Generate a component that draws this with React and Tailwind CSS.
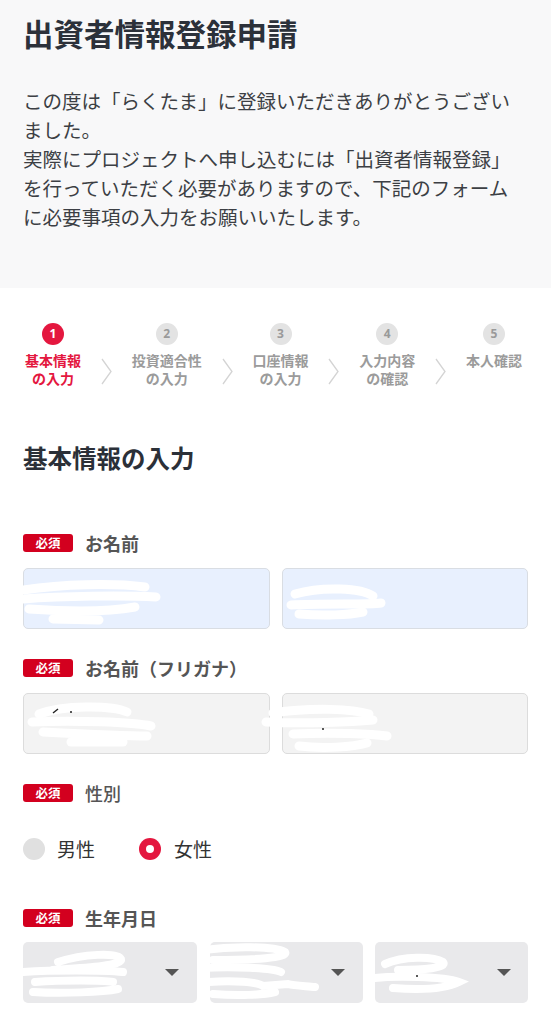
import React from "react";

const FONT = { fontFamily: '"Noto Sans CJK JP", "Noto Sans", sans-serif' };

function Badge() {
  return (
    <span className="inline-flex items-center justify-center w-[50px] h-[18px] rounded-[3px] bg-[#d3001f] text-white text-[12.5px] font-bold leading-none">
      必須
    </span>
  );
}

function FieldLabel({ children, weight = "font-bold", className = "" }) {
  return (
    <div className={"flex items-center gap-[12px] h-[24px] " + className}>
      <Badge />
      <span className={"text-[18px] leading-[24px] text-[#555555] " + weight}>{children}</span>
    </div>
  );
}

function Chevron() {
  return (
    <svg width="11" height="27" viewBox="0 0 11 27" className="mt-[35px] shrink-0">
      <path d="M1 1 L10 13.5 L1 26" fill="none" stroke="#d4d4d4" strokeWidth="1.3" />
    </svg>
  );
}

function Step({ n, lines, active }) {
  return (
    <div className="flex flex-col items-center">
      <div
        className={
          "w-[22px] h-[22px] rounded-full flex items-center justify-center text-[12px] font-bold " +
          (active ? "bg-[#e4173f] text-white" : "bg-[#e3e3e3] text-[#9a9a9a]")
        }
        style={{ fontFamily: '"Open Sans", sans-serif' }}
      >
        {n}
      </div>
      <div
        className={
          "mt-[6px] text-[14px] leading-[18px] font-bold text-center " +
          (active ? "text-[#e4173f]" : "text-[#9b9b9b]")
        }
      >
        {lines.map((l, i) => (
          <div key={i}>{l}</div>
        ))}
      </div>
    </div>
  );
}

function Caret() {
  return (
    <svg width="14" height="7" viewBox="0 0 14 7">
      <path d="M0 0 H14 L7 7 Z" fill="#555555" />
    </svg>
  );
}

export default function App() {
  return (
    <div className="w-[551px] min-h-[1024px] bg-white" style={FONT}>
      {/* header */}
      <div className="bg-[#f8f8f9] pt-[15px] pb-[57px] px-[23px]">
        <h1 className="text-[30.5px] leading-[36px] font-bold text-[#2c313a]">出資者情報登録申請</h1>
        <p className="mt-[35px] w-[495px] text-[19.5px] leading-[29px] text-[#3c3f44]">
          この度は「らくたま」に登録いただきありがとうございました。
          <br />
          実際にプロジェクトへ申し込むには「出資者情報登録」を行っていただく必要がありますので、下記のフォームに必要事項の入力をお願いいたします。
        </p>
      </div>

      {/* stepper */}
      <div className="flex justify-between items-start pt-[35px] pl-[25px] pr-[29px]">
        <Step n="1" lines={["基本情報", "の入力"]} active />
        <Chevron />
        <Step n="2" lines={["投資適合性", "の入力"]} />
        <Chevron />
        <Step n="3" lines={["口座情報", "の入力"]} />
        <Chevron />
        <Step n="4" lines={["入力内容", "の確認"]} />
        <Chevron />
        <Step n="5" lines={["本人確認"]} />
      </div>

      <div className="px-[23px]">
        <h2 className="mt-[56px] text-[24.5px] leading-[30px] font-bold text-[#2b3038]">基本情報の入力</h2>

        {/* name */}
        <FieldLabel className="mt-[58px]">お名前</FieldLabel>
        <div className="relative mt-[13px] grid grid-cols-2 gap-[12px]">
          <div className="h-[61px] rounded-[5px] bg-[#e8f0fe] border border-[#d9dde3]" />
          <div className="h-[61px] rounded-[5px] bg-[#e8f0fe] border border-[#d9dde3]" />
          <svg className="absolute left-0 top-0" width="505" height="61" viewBox="0 0 505 61" fill="none">
            <g stroke="#ffffff" strokeLinecap="round" strokeWidth="9">
              <path d="M0 22 C40 16 90 15 122 19" />
              <path d="M0 31 C40 28 100 27 133 29" />
              <path d="M6 41 C50 44 90 43 112 39" />
              <path d="M30 51 L76 52" />
              <path d="M272 26 C300 18 338 20 350 28" />
              <path d="M268 37 C300 35 345 37 358 35" />
              <path d="M276 46 C300 48 326 47 340 44" />
            </g>
          </svg>
        </div>

        {/* furigana */}
        <FieldLabel className="mt-[27px]">お名前（フリガナ）</FieldLabel>
        <div className="relative mt-[13px] grid grid-cols-2 gap-[12px]">
          <div className="h-[61px] rounded-[5px] bg-[#f3f3f3] border border-[#dcdcdc]" />
          <div className="h-[61px] rounded-[5px] bg-[#f3f3f3] border border-[#dcdcdc]" />
          <svg className="absolute left-0 top-0" width="505" height="61" viewBox="0 0 505 61" fill="none">
            <g stroke="#ffffff" strokeLinecap="round" strokeWidth="9">
              <path d="M16 21 C40 12 88 12 104 19" />
              <path d="M9 29 C50 27 110 29 128 33" />
              <path d="M20 39 C60 41 100 43 124 43" />
              <path d="M48 49 L100 49" />
              <path d="M250 20 C290 14 330 16 346 21" />
              <path d="M243 29 C280 31 330 29 350 27" />
              <path d="M270 41 C310 39 350 41 364 43" />
              <path d="M276 53 C300 56 330 54 344 50" />
            </g>
            <path d="M30 20 L35 16" stroke="#222" strokeWidth="1.5" />
            <circle cx="48" cy="19" r="1" fill="#222" />
            <circle cx="300" cy="36" r="1" fill="#222" />
          </svg>
        </div>

        {/* gender */}
        <FieldLabel className="mt-[27px]" weight="font-medium">性別</FieldLabel>
        <div className="mt-[32px] flex items-center h-[24px]">
          <div className="w-[22px] h-[22px] rounded-full bg-[#e0e0e0]" />
          <span className="ml-[12px] text-[19px] leading-[24px] text-[#333333]">男性</span>
          <div className="ml-[44px] w-[22px] h-[22px] rounded-full bg-[#e4173f] flex items-center justify-center">
            <div className="w-[8px] h-[8px] rounded-full bg-white" />
          </div>
          <span className="ml-[13px] text-[19px] leading-[24px] text-[#333333]">女性</span>
        </div>

        {/* birthday */}
        <FieldLabel className="mt-[45px]">生年月日</FieldLabel>
        <div className="relative mt-[12px] flex gap-[12.5px]">
          <div className="w-[174px] h-[61px] rounded-[5px] bg-[#e9e9eb] flex items-center justify-end pr-[18px]">
            <Caret />
          </div>
          <div className="w-[153px] h-[61px] rounded-[5px] bg-[#e9e9eb] flex items-center justify-end pr-[18px]">
            <Caret />
          </div>
          <div className="w-[153px] h-[61px] rounded-[5px] bg-[#e9e9eb] flex items-center justify-end pr-[17px]">
            <Caret />
          </div>
          <svg className="absolute left-0 top-0" width="505" height="61" viewBox="0 0 505 61" fill="none">
            <g stroke="#ffffff" strokeLinecap="round" strokeWidth="8">
              <path d="M35 20 C60 12 95 10 98 17 C100 24 60 26 30 28" />
              <path d="M0 30 C30 28 80 28 100 30" />
              <path d="M12 40 C40 38 80 38 90 40" />
              <path d="M10 50 C40 52 80 50 95 47" />
              <path d="M180 8 C210 4 250 4 262 10 C266 16 230 18 190 18" />
              <path d="M178 26 C210 24 250 26 258 30" />
              <path d="M186 40 C210 38 235 40 240 44 L265 42 C272 44 285 44 292 45" />
              <path d="M190 52 C215 54 240 53 252 50" />
              <path d="M362 22 C380 14 410 14 420 20 C425 26 400 28 375 28" />
              <path d="M352 36 C370 34 420 34 436 40 C420 48 395 48 370 46" />
            </g>
            <circle cx="394" cy="34" r="1" fill="#222" />
          </svg>
        </div>
      </div>
    </div>
  );
}
